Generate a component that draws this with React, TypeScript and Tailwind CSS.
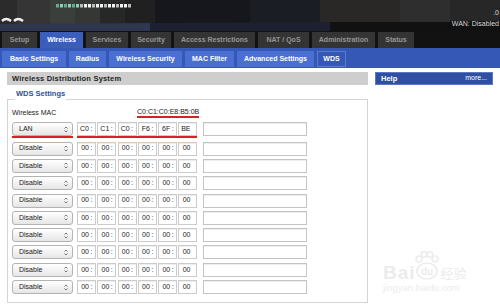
import React from 'react'

const topTabs = [
  { label: 'Setup', w: 'w-[35px]' },
  { label: 'Wireless', w: 'w-[43px]', active: true },
  { label: 'Services', w: 'w-[42px]' },
  { label: 'Security', w: 'w-[40px]' },
  { label: 'Access Restrictions', w: 'w-[81px]' },
  { label: 'NAT / QoS', w: 'w-[51px]' },
  { label: 'Administration', w: 'w-[63px]' },
  { label: 'Status', w: 'w-[36px]' },
]

const subTabs = [
  { label: 'Basic Settings', w: 'w-[64px]' },
  { label: 'Radius', w: 'w-[37px]' },
  { label: 'Wireless Security', w: 'w-[73px]' },
  { label: 'MAC Filter', w: 'w-[49px]' },
  { label: 'Advanced Settings', w: 'w-[77px]' },
  { label: 'WDS', w: 'w-[29px]', active: true },
]

const lanMac = ['C0', 'C1', 'C0', 'F6', '6F', 'BE']
const emptyMac = ['00', '00', '00', '00', '00', '00']

function HeaderArt() {
  const squares = Array.from({ length: 19 }, (_, i) => i)
  return (
    <svg className="absolute inset-0" width="500" height="31" viewBox="0 0 500 31">
      <rect width="500" height="31" fill="#111" />
      <rect x="0" y="0" width="17" height="25" fill="#2b2b2b" />
      <rect x="17" y="0" width="33" height="25" fill="#343534" />
      <rect x="50" y="0" width="25" height="25" fill="#3b3f3c" />
      <rect x="75" y="0" width="25" height="25" fill="#353735" />
      <rect x="100" y="0" width="25" height="25" fill="#262827" />
      <rect x="125" y="0" width="30" height="25" fill="#1f201f" />
      <rect x="155" y="0" width="95" height="24" fill="#15171d" />
      <rect x="250" y="0" width="70" height="23" fill="#1b1d24" />
      <rect x="320" y="0" width="80" height="22" fill="#2a2826" />
      <rect x="400" y="0" width="50" height="22" fill="#2e2e2e" />
      <rect x="450" y="0" width="50" height="21" fill="#272727" />
      <path d="M0 24 L150 23 L150 31 L0 31 Z" fill="#2e3650" />
      <path d="M150 23 L330 22 L330 31 L150 31 Z" fill="#1c2030" />
      <path d="M2 21 q4 -4 9 0 M14 21 q4 -4 9 0" stroke="#eee" strokeWidth="2.5" fill="none" />
      {squares.map((i) => (
        <rect
          key={i}
          x={56 + i * 4}
          y={4}
          width="3"
          height="3.5"
          fill={i < 6 ? (i % 2 ? '#8fd0b8' : '#5fae94') : i % 3 === 0 ? '#bbb' : '#f2f2f2'}
        />
      ))}
    </svg>
  )
}

function Header() {
  return (
    <div className="relative h-[31px] overflow-hidden">
      <HeaderArt />
      <div className="relative flex h-full flex-col items-end pr-[1px] pt-[9px] text-[7px] leading-[8px] text-[#d8d8d8]">
        <span>.0</span>
        <span className="mt-[3px]">WAN: Disabled</span>
      </div>
    </div>
  )
}

function TopTabs() {
  return (
    <nav className="flex h-[17px] gap-[3px] bg-[#121212] pl-[2px] pt-[1px]">
      {topTabs.map((t) => (
        <div
          key={t.label}
          className={`${t.w} flex h-[16px] items-center justify-center text-[7px] font-bold ${
            t.active ? 'bg-[#3b5ebd] text-white' : 'bg-[#343434] text-[#959595]'
          }`}
        >
          {t.label}
        </div>
      ))}
    </nav>
  )
}

function SubTabs() {
  return (
    <nav className="flex h-[20px] gap-[3px] bg-[#3557b5] pl-[2px] pt-[3px]">
      {subTabs.map((t) => (
        <div
          key={t.label}
          className={`${t.w} flex h-[16px] items-center justify-center text-[7px] font-bold text-white ${
            t.active ? 'border border-[#5a7bd0] bg-[#3557b5]' : 'bg-[#4a6fd2]'
          }`}
        >
          {t.label}
        </div>
      ))}
    </nav>
  )
}

function SelectBox({ value }: { value: string }) {
  return (
    <div className="flex h-[14px] w-[61px] items-center justify-between rounded-[3px] border border-[#b3b3b3] bg-gradient-to-b from-white to-[#e6e6e6] pl-[6px] pr-[4px] text-[7px] text-[#1a1a1a]">
      <span>{value}</span>
      <svg width="4" height="7" viewBox="0 0 4 7">
        <path d="M0.5 2.5 L2 1 L3.5 2.5 M0.5 4.5 L2 6 L3.5 4.5" stroke="#555" strokeWidth="0.8" fill="none" />
      </svg>
    </div>
  )
}

function MacFields({ parts }: { parts: string[] }) {
  return (
    <div className="flex gap-[1.3px]">
      {parts.map((p, i) => (
        <div
          key={i}
          className="flex h-[14px] w-[19px] items-center justify-end border border-[#cbcbcb] bg-white pr-[1px] text-[7px] text-[#1a1a1a] shadow-[inset_0_1px_0_#eee]"
        >
          <span>{p}</span>
          <span className="w-[5px] text-center">{i < parts.length - 1 ? ':' : ''}</span>
        </div>
      ))}
    </div>
  )
}

function TextField() {
  return <div className="h-[14px] w-[104px] border border-[#c4c4c4] bg-white shadow-[inset_0_1px_0_#eee]" />
}

function WdsRow({ value, mac }: { value: string; mac: string[] }) {
  return (
    <div className="flex h-[14px] items-center">
      <SelectBox value={value} />
      <div className="ml-[4px]">
        <MacFields parts={mac} />
      </div>
      <div className="ml-[5.5px]">
        <TextField />
      </div>
    </div>
  )
}

function Watermark() {
  return (
    <div className="mt-[166px] flex flex-col pl-[8px] text-[#ececec]">
      <div className="flex items-end">
        <span className="text-[19px] font-bold leading-[16px] tracking-[1px]">Bai</span>
        <svg width="26" height="30" viewBox="0 0 26 30" className="-ml-[3px]">
          <g fill="none" stroke="#ececec" strokeWidth="1.6">
            <circle cx="6" cy="8" r="3" />
            <circle cx="11" cy="3.5" r="2.8" />
            <circle cx="17" cy="3.5" r="2.8" />
            <circle cx="22" cy="8" r="3" />
            <ellipse cx="14" cy="20" rx="10" ry="8" />
          </g>
          <text x="14" y="24" textAnchor="middle" fontSize="10" fontWeight="bold" fill="#ececec" fontFamily="Liberation Sans, sans-serif">
            du
          </text>
        </svg>
        <span className="ml-[2px] font-['Noto_Sans_CJK_SC',sans-serif] text-[13px] leading-[16px]">经验</span>
      </div>
      <span className="mt-[1px] text-[9.5px] leading-[11px]">jingyan.baidu.com</span>
    </div>
  )
}

export default function App() {
  return (
    <div className="h-[308px] w-[500px] overflow-hidden bg-white font-['Liberation_Sans',Arial,sans-serif]">
      <Header />
      <TopTabs />
      <SubTabs />
      <main className="flex pl-[7px] pt-[4px]">
        <section className="w-[361px]">
          <h2 className="flex h-[13px] items-center bg-[#cecece] pl-[5px] text-[7.5px] font-bold tracking-[0.2px] text-[#1e1e1e]">
            Wireless Distribution System
          </h2>
          <fieldset className="mt-[5px] border border-[#d4d4d4] pb-[8px] pl-[4px] pr-[4px]">
            <legend className="ml-[3px] px-[1px] pb-[10px] text-[7.5px] font-bold leading-[8px] text-[#2d4f9f]">
              WDS Settings
            </legend>
            <div className="flex h-[10px] items-center text-[7px] text-[#1a1a1a]">
              <span className="w-[125px]">Wireless MAC</span>
              <span className="border-b-2 border-[#dd1f1f] leading-[8px]">C0:C1:C0:E8:B5:0B</span>
            </div>
            <div className="mt-[4px] flex items-start">
              <div className="flex flex-col">
                <SelectBox value="LAN" />
                <div className="h-[2px] bg-[#dd1f1f]" />
              </div>
              <div className="ml-[4px] flex flex-col">
                <MacFields parts={lanMac} />
                <div className="h-[2px] bg-[#dd1f1f]" />
              </div>
              <div className="ml-[5.5px]">
                <TextField />
              </div>
            </div>
            <div className="mt-[3.7px] flex flex-col gap-[3.3px]">
              {Array.from({ length: 9 }, (_, i) => (
                <WdsRow key={i} value="Disable" mac={emptyMac} />
              ))}
            </div>
          </fieldset>
        </section>
        <aside className="ml-[7px] w-[118px]">
          <div className="flex h-[13px] items-center justify-between border border-[#5a78c6] bg-[#2f4fa2] pl-[5px] pr-[5px] text-white">
            <span className="text-[7.5px] font-bold">Help</span>
            <span className="text-[7px]">more...</span>
          </div>
          <Watermark />
        </aside>
      </main>
    </div>
  )
}
